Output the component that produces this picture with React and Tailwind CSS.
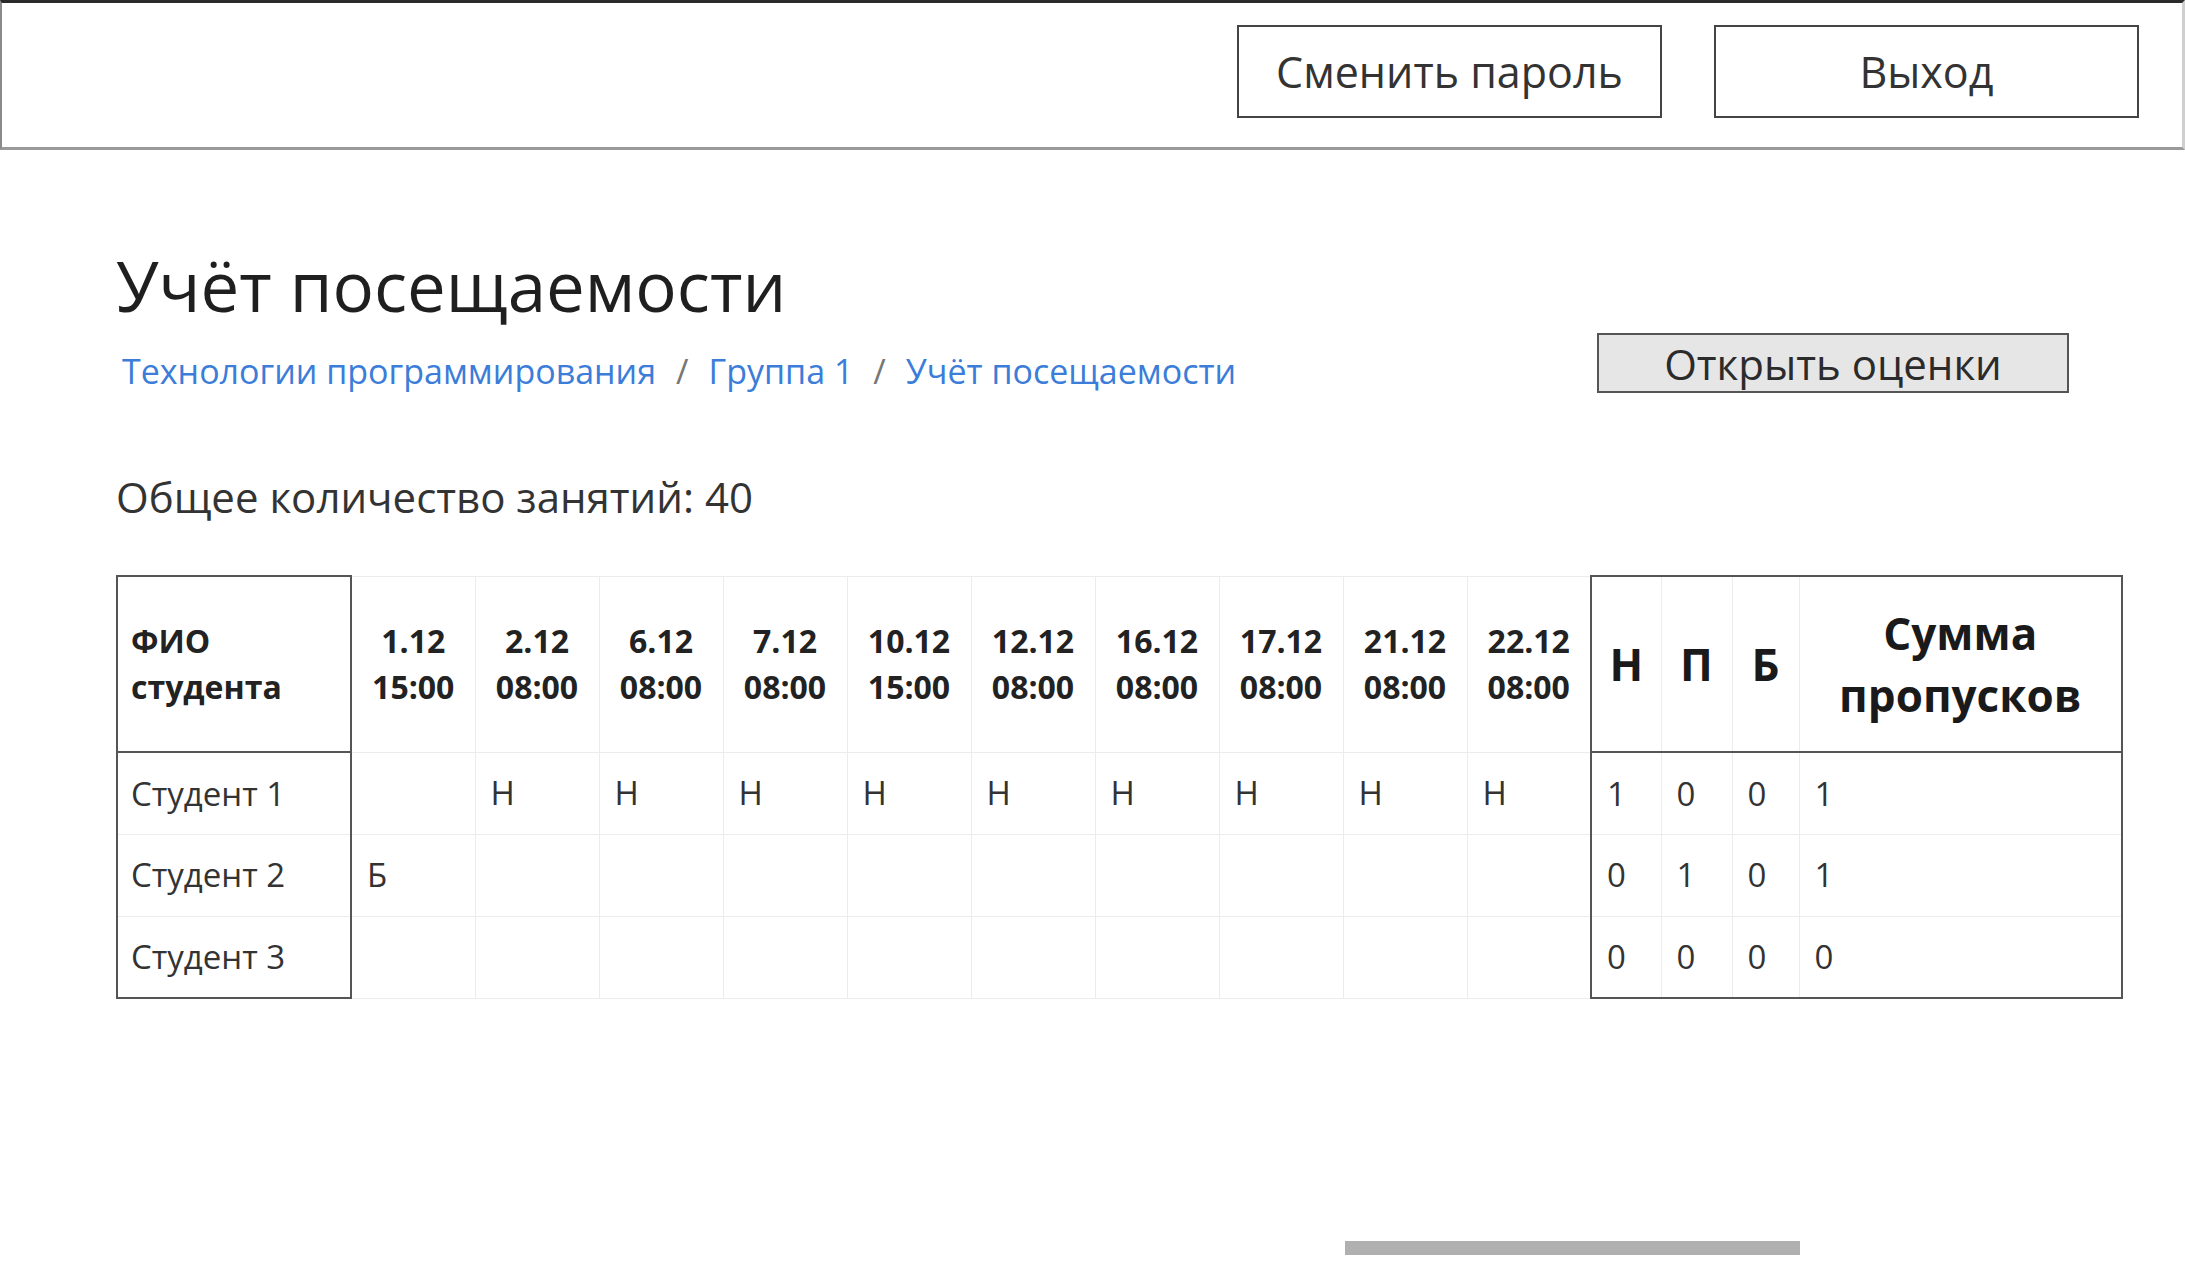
import React from "react";

const dates = [
  ["1.12", "15:00"],
  ["2.12", "08:00"],
  ["6.12", "08:00"],
  ["7.12", "08:00"],
  ["10.12", "15:00"],
  ["12.12", "08:00"],
  ["16.12", "08:00"],
  ["17.12", "08:00"],
  ["21.12", "08:00"],
  ["22.12", "08:00"],
];

const students = [
  { name: "Студент 1", marks: ["", "Н", "Н", "Н", "Н", "Н", "Н", "Н", "Н", "Н"], sum: ["1", "0", "0", "1"] },
  { name: "Студент 2", marks: ["Б", "", "", "", "", "", "", "", "", ""], sum: ["0", "1", "0", "1"] },
  { name: "Студент 3", marks: ["", "", "", "", "", "", "", "", "", ""], sum: ["0", "0", "0", "0"] },
];

export default function App() {
  return (
    <div className="min-h-[1269px] bg-white text-[#2b2b2b]" style={{ fontFamily: '"Open Sans", "Noto Sans", sans-serif' }}>
      <header className="h-[150px] border-t-[3px] border-t-[#2a2a2a] border-l-2 border-l-[#8a8a8a] border-b-[3px] border-b-[#9a9a9a] border-r-[3px] border-r-[#cfcfcf] flex items-start justify-end pt-[22px] pr-[43px] gap-[52px]">
        <button className="w-[425px] h-[93px] border-2 border-[#444] bg-white text-[43px] text-[#333] flex items-center justify-center pt-[2px]">
          Сменить пароль
        </button>
        <button className="w-[425px] h-[93px] border-2 border-[#444] bg-white text-[43px] text-[#333] flex items-center justify-center pt-[2px]">
          Выход
        </button>
      </header>

      <main className="pl-[116px] pr-[64px]">
        <h1 className="mt-[89px] text-[69px] leading-[92px] text-[#1f1f1f] font-normal">Учёт посещаемости</h1>

        <div className="mt-[2px] flex items-start justify-between">
          <nav className="mt-[15px] ml-[6px] text-[34px] leading-[46px] text-[#3b7dd8] flex items-center gap-[20px]">
            <span>Технологии программирования</span>
            <span className="text-[#777]">/</span>
            <span>Группа 1</span>
            <span className="text-[#777]">/</span>
            <span>Учёт посещаемости</span>
          </nav>
          <button className="mr-[52px] w-[472px] h-[60px] bg-[#e6e6e6] border-2 border-[#555] text-[42px] text-[#2b2b2b] flex items-center justify-center">
            Открыть оценки
          </button>
        </div>

        <p className="mt-[74px] text-[42px] leading-[57px] text-[#333]">Общее количество занятий: 40</p>

        <table className="mt-[50px] border-collapse table-fixed w-[2005px]">
          <colgroup>
            <col className="w-[234px]" />
            {dates.map((_, i) => (
              <col key={i} className="w-[124px]" />
            ))}
            <col className="w-[70px]" />
            <col className="w-[71px]" />
            <col className="w-[67px]" />
            <col className="w-[323px]" />
          </colgroup>
          <thead>
            <tr className="h-[176px]">
              <th className="border-2 border-[#555] text-left pl-[13px] text-[32px] leading-[46px] font-bold text-[#222] align-middle">
                ФИО
                <br />
                студента
              </th>
              {dates.map(([d, t], i) => (
                <th key={i} className="border border-[#ececec] text-center text-[32px] leading-[46px] font-bold text-[#222] align-middle">
                  {d}
                  <br />
                  {t}
                </th>
              ))}
              <th className="border-y-2 border-l-2 border-y-[#555] border-l-[#555] border-r border-r-[#ececec] text-center text-[44px] font-bold text-[#1a1a1a]">Н</th>
              <th className="border-y-2 border-y-[#555] border-x border-x-[#ececec] text-center text-[44px] font-bold text-[#1a1a1a]">П</th>
              <th className="border-y-2 border-y-[#555] border-x border-x-[#ececec] text-center text-[44px] font-bold text-[#1a1a1a]">Б</th>
              <th className="border-2 border-[#555] border-l-[#ececec] border-l text-center text-[44px] leading-[62px] font-bold text-[#1a1a1a]">
                Сумма
                <br />
                пропусков
              </th>
            </tr>
          </thead>
          <tbody>
            {students.map((s, ri) => {
              const last = ri === students.length - 1;
              return (
                <tr key={ri} className="h-[82px]">
                  <td className={`border-x-2 border-x-[#555] border-t border-t-[#ececec] pl-[13px] text-[33px] text-[#333] ${last ? "border-b-2 border-b-[#555]" : "border-b border-b-[#ececec]"}`}>
                    {s.name}
                  </td>
                  {s.marks.map((m, i) => (
                    <td key={i} className="border border-[#ececec] pl-[15px] text-[33px] text-[#333]">
                      {m}
                    </td>
                  ))}
                  {s.sum.map((v, i) => (
                    <td
                      key={i}
                      className={`border-t border-t-[#ececec] pl-[15px] text-[33px] text-[#333] ${i === 0 ? "border-l-2 border-l-[#555]" : "border-l border-l-[#ececec]"} ${i === 3 ? "border-r-2 border-r-[#555]" : "border-r border-r-[#ececec]"} ${last ? "border-b-2 border-b-[#555]" : "border-b border-b-[#ececec]"}`}
                    >
                      {v}
                    </td>
                  ))}
                </tr>
              );
            })}
          </tbody>
        </table>

        <div className="mt-[242px] ml-[1229px] w-[455px] h-[14px] bg-[#b0b0b0]" />
      </main>
    </div>
  );
}
